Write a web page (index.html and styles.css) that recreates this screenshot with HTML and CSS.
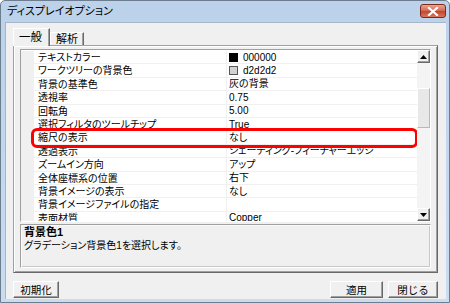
FILE: index.html
```html
<!DOCTYPE html>
<html lang="ja">
<head>
  <meta charset="UTF-8" />
  <title>ディスプレイオプション</title>
  <link rel="stylesheet" href="styles.css">
</head>
<body>
  <div class="window">
    <div class="titlebar">
      <span class="title">ディスプレイオプション</span>
      <div class="close">
        <svg width="12" height="9" viewBox="0 0 12 9"><path d="M2 1 L10 8 M10 1 L2 8" stroke="#fff" stroke-width="2.2" stroke-linecap="square"/></svg>
      </div>
    </div>

    <div class="client">
      <div class="tabs">
        <div class="tab active">一般</div>
        <div class="tab">解析</div>
      </div>

      <div class="panel">
        <div class="list">
          <div class="rows">
            <div class="row"><span class="gutter"></span><span class="name">テキストカラー</span><span class="value"><i class="swatch black"></i>000000</span></div>
            <div class="row"><span class="gutter"></span><span class="name">ワークツリーの背景色</span><span class="value"><i class="swatch grey"></i>d2d2d2</span></div>
            <div class="row"><span class="gutter"></span><span class="name">背景の基準色</span><span class="value">灰の背景</span></div>
            <div class="row"><span class="gutter"></span><span class="name">透視率</span><span class="value">0.75</span></div>
            <div class="row"><span class="gutter"></span><span class="name">回転角</span><span class="value">5.00</span></div>
            <div class="row"><span class="gutter"></span><span class="name">選択フィルタのツールチップ</span><span class="value">True</span></div>
            <div class="row marked"><span class="gutter"></span><span class="name">縮尺の表示</span><span class="value">なし</span><span class="mark"></span></div>
            <div class="row"><span class="gutter"></span><span class="name">透過表示</span><span class="value">シェーディング-フィーチャーエッジ</span></div>
            <div class="row"><span class="gutter"></span><span class="name">ズームイン方向</span><span class="value">アップ</span></div>
            <div class="row"><span class="gutter"></span><span class="name">全体座標系の位置</span><span class="value">右下</span></div>
            <div class="row"><span class="gutter"></span><span class="name">背景イメージの表示</span><span class="value">なし</span></div>
            <div class="row"><span class="gutter"></span><span class="name">背景イメージファイルの指定</span><span class="value"></span></div>
            <div class="row"><span class="gutter"></span><span class="name">表面材質</span><span class="value">Copper</span></div>
          </div>
          <div class="vscroll">
            <div class="sbtn"><svg width="7" height="4" viewBox="0 0 7 4"><path d="M0 4 L3.5 0 L7 4 Z" fill="#000"/></svg></div>
            <div class="track"><div class="thumb"></div></div>
            <div class="sbtn"><svg width="7" height="4" viewBox="0 0 7 4"><path d="M0 0 L3.5 4 L7 0 Z" fill="#000"/></svg></div>
          </div>
        </div>
        <div class="desc">
          <b>背景色1</b>
          <p>グラデーション背景色1を選択します。</p>
        </div>
      </div>

      <div class="footer">
        <button class="btn reset">初期化</button>
        <span class="spacer"></span>
        <button class="btn apply">適用</button>
        <button class="btn closebtn">閉じる</button>
      </div>
    </div>
  </div>
</body>
</html>
```

FILE: styles.css
```css
body {
  margin: 0;
  font-family: "Liberation Sans", "Noto Sans CJK JP", sans-serif;
  font-feature-settings: "palt";
  background: #fff;
}
.window {
  width: 450px;
  height: 303px;
  box-sizing: border-box;
  border: 1px solid #6c7d90;
  border-radius: 5px 5px 0 0;
  background: linear-gradient(#bcd2ea, #c9dcf0);
  padding: 0 3px 3px 4px;
  display: flex;
  flex-direction: column;
  overflow: hidden;
}
.titlebar {
  height: 21px;
  flex: none;
  display: flex;
  justify-content: space-between;
  align-items: flex-start;
}
.title {
  font-size: 11px;
  line-height: 21px;
  padding-left: 2px;
  color: #000;
}
.close {
  width: 26px;
  height: 14px;
  margin-top: 3px;
  box-sizing: border-box;
  border: 1px solid #7d2a1c;
  border-radius: 3px;
  background: linear-gradient(#e9a593, #d5654c 50%, #c2452b 51%, #d6785c);
  display: flex;
  align-items: center;
  justify-content: center;
}
.client {
  flex: 1;
  background: #f0f0f0;
  border: 1px solid #a6b6c8;
  border-width: 1px 0 0 1px;
  display: flex;
  flex-direction: column;
}

/* tabs */
.tabs {
  display: flex;
  align-items: flex-end;
  height: 17px;
  padding: 5px 0 0 7px;
  font-size: 11px;
  position: relative;
  z-index: 1;
}
.tab {
  box-sizing: border-box;
  height: 13px;
  line-height: 12px;
  padding: 0 5px;
  border-top: 1px solid #fff;
  border-left: 1px solid #fff;
  border-right: 1px solid #696969;
  box-shadow: inset -1px 0 #a0a0a0;
  background: #f0f0f0;
}
.tab.active {
  height: 18px;
  line-height: 16px;
  padding: 0 7px 0 5px;
  margin-bottom: -1px;
  font-size: 11.5px;
}

/* panel */
.panel {
  height: 228px;
  box-sizing: border-box;
  margin: 0 8px 0 7px;
  padding: 3px 6px 3px 6px;
  border: 1px solid #a0a0a0;
  border-right-color: #696969;
  border-bottom-color: #696969;
  box-shadow: inset 1px 1px #fff, inset -1px -1px #a0a0a0;
  display: flex;
  flex-direction: column;
  gap: 2px;
}
.list {
  height: 173px;
  box-sizing: border-box;
  border: 1px solid #a0a0a0;
  border-right-color: #fff;
  border-bottom-color: #fff;
  background: #fff;
  display: flex;
  overflow: hidden;
}
.rows {
  flex: 1;
  overflow: hidden;
  padding-top: 1px;
  font-size: 10px;
}
.row {
  height: 13.4px;
  box-sizing: border-box;
  display: flex;
  line-height: 13px;
  position: relative;
}
.gutter {
  width: 13px;
  flex: none;
  background: #f0f0f0;
}
.name {
  width: 193px;
  flex: none;
  box-sizing: border-box;
  padding-left: 4px;
  border-right: 1px solid #f0f0f0;
  border-bottom: 1px solid #f0f0f0;
  white-space: nowrap;
}
.value {
  flex: 1;
  padding-left: 2px;
  border-bottom: 1px solid #f0f0f0;
  white-space: nowrap;
  display: flex;
  align-items: center;
}
.swatch {
  width: 9px;
  height: 9px;
  margin-right: 5px;
  box-sizing: border-box;
  border: 1px solid #000;
}
.swatch.black { background: #000; }
.swatch.grey { background: #d2d2d2; border-color: #555; }

.mark {
  position: absolute;
  top: -3px;
  bottom: -3px;
  left: 10px;
  right: -1px;
  border: 3px solid #f00;
  border-radius: 6px;
  z-index: 2;
}

/* scrollbar */
.vscroll {
  width: 13px;
  flex: none;
  display: flex;
  flex-direction: column;
  background: #f4f4f4;
}
.sbtn {
  height: 13px;
  box-sizing: border-box;
  background: #f0f0f0;
  border: 1px solid #fff;
  border-right-color: #696969;
  border-bottom-color: #696969;
  box-shadow: inset -1px -1px #a0a0a0;
  display: flex;
  align-items: center;
  justify-content: center;
}
.track {
  flex: 1;
  padding-top: 25px;
}
.thumb {
  height: 40px;
  box-sizing: border-box;
  background: #e8e8e8;
  border: 1px solid #fff;
  border-right-color: #b8b8b8;
  border-bottom-color: #b8b8b8;
}

/* description */
.desc {
  height: 44px;
  box-sizing: border-box;
  border: 1px solid #a0a0a0;
  border-right-color: #fff;
  border-bottom-color: #fff;
  box-shadow: inset 1px 1px #f8f8f8, inset -1px -1px #c8c8c8;
  padding: 1px 3px;
  font-size: 10px;
  line-height: 13px;
}
.desc b {
  display: block;
  font-size: 11px;
}
.desc p {
  margin: 0;
}

/* footer */
.footer {
  display: flex;
  padding: 8px 8px 0 7px;
  gap: 5px;
}
.spacer {
  flex: 1;
}
.btn {
  height: 17px;
  padding: 0;
  box-sizing: border-box;
  font-family: inherit;
  font-size: 10.5px;
  line-height: 14px;
  background: #f0f0f0;
  border: 1px solid #fff;
  border-right-color: #696969;
  border-bottom-color: #696969;
  box-shadow: inset -1px -1px #a0a0a0;
  color: #000;
}
.reset { width: 46px; }
.apply { width: 53px; }
.closebtn { width: 50px; }
```
